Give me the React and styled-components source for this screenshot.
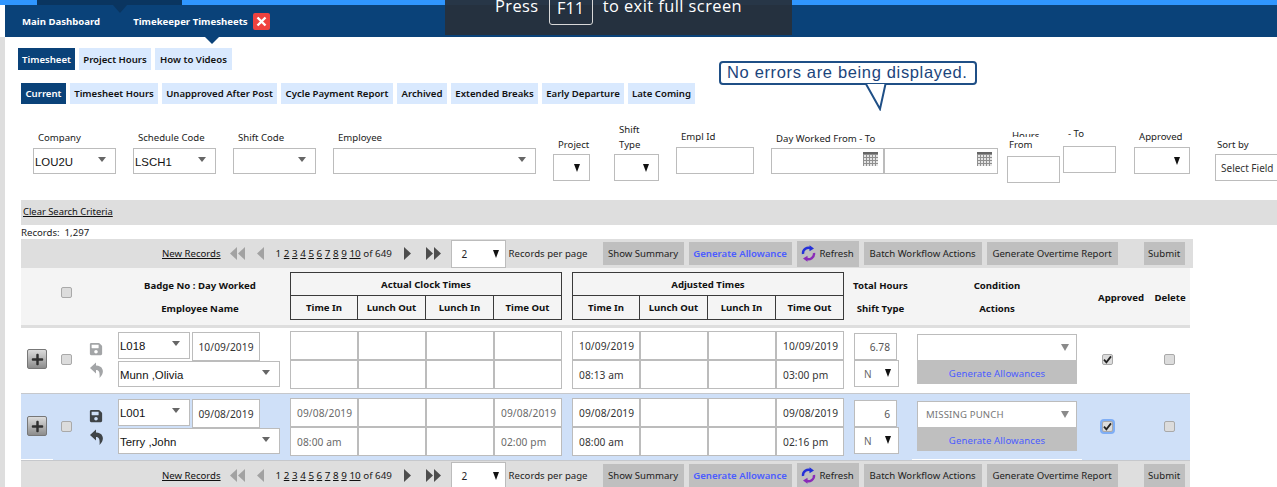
import React from "react";
import styled, { createGlobalStyle } from "styled-components";
import { FaSave, FaPlus } from "react-icons/fa";

const UI = `"Noto Sans", "Open Sans", sans-serif`;
const ARIAL = `"Liberation Sans", Arial, sans-serif`;
const COLS = "32px 27px 32px 178px 272px 10px 272px 63px 180px 60px 43px";

const Global = createGlobalStyle`
  html, body { margin: 0; padding: 0; height: 100%; background: #fff; overflow: hidden; }
  body { font-family: ${UI}; font-size: 10px; color: #222; }
  * { box-sizing: border-box; }
`;

const Page = styled.div`
  position: relative;
  width: 1277px;
  height: 487px;
  overflow: hidden;
  display: flex;
  flex-direction: column;
`;

const TopStrip = styled.div`height: 5px; background: #2f96ff; flex: none;`;

const Nav = styled.nav`
  flex: none;
  height: 32px;
  margin-left: 5px;
  background: #0a4279;
  display: flex;
  align-items: center;
  padding: 0 0 0 17px;
  color: #fff;
  font-weight: 700;
  font-size: 9.6px;
`;

const NavItem = styled.span`
  position: relative;
  margin-left: ${(p) => p.$ml || 0}px;
  white-space: nowrap;
`;

const ActiveMark = styled.div`
  position: absolute;
  left: 37px;
  top: 0;
  width: 145px;
  height: 5px;
  background: #0a3560;
  &::after {
    content: "";
    position: absolute;
    left: 76px;
    top: 5px;
    border: 7px solid transparent;
    border-top: 8px solid #0a3560;
    border-bottom: 0;
  }
`;

const PageMark = styled.div`
  position: absolute;
  left: 205px;
  top: 37px;
  border: 7px solid transparent;
  border-top-color: #0a4279;
  border-bottom: 0;
`;

const CloseTab = styled.span`
  width: 17px;
  height: 17px;
  margin-left: 5px;
  background: #f0423f;
  border-radius: 2px;
  display: flex;
  align-items: center;
  justify-content: center;
`;

const FullscreenHint = styled.div`
  position: absolute;
  left: 445px;
  top: 0;
  width: 347px;
  height: 35px;
  background: rgba(39, 48, 60, 0.94);
  color: #fff;
  font-family: "Open Sans", sans-serif;
  font-size: 16.4px;
  overflow: hidden;
  display: flex;
  align-items: flex-start;
  padding-left: 50px;
`;

const HintText = styled.span`margin-top: -5px; line-height: 22px; letter-spacing: 0.45px;`;

const KeyCap = styled.span`
  width: 44px;
  height: 39px;
  margin: -14px 10px 0 10px;
  border: 1px solid #d8d8d8;
  border-radius: 3px;
  display: flex;
  align-items: center;
  justify-content: center;
  padding-top: 4px;
`;

const Callout = styled.div`
  position: absolute;
  left: 719px;
  top: 61px;
  width: 258px;
  height: 24px;
  border: 2px solid #1f4f86;
  border-radius: 4px;
  background: #fff;
  color: #1b457c;
  font: 16.5px/18px ${ARIAL};
  letter-spacing: 0.65px;
  padding-left: 6px;
  white-space: nowrap;
`;

const CalloutTail = styled.svg`
  position: absolute;
  left: 863px;
  top: 83px;
  width: 26px;
  height: 28px;
`;

const Body = styled.div`
  flex: 1;
  display: flex;
  min-height: 0;
`;

const SideStrip = styled.div`width: 5px; background: #dedede; flex: none;`;

const Content = styled.main`flex: 1; min-width: 0;`;

const TabRow = styled.div`
  display: flex;
  gap: 4px;
  height: ${(p) => p.$h}px;
  margin: ${(p) => p.$mt}px 0 0 ${(p) => p.$ml}px;
`;

const Tab = styled.a`
  display: flex;
  align-items: center;
  justify-content: center;
  width: ${(p) => p.$w}px;
  background: ${(p) => (p.$active ? "#0a4279" : "#d9e9fe")};
  color: ${(p) => (p.$active ? "#fff" : "#111")};
  font-weight: 600;
  font-size: 9.6px;
  white-space: nowrap;
`;

const FilterBar = styled.section`
  display: flex;
  align-items: flex-start;
  margin-top: 18px;
  height: 78px;
  padding-left: 28px;
  color: #222;
  white-space: nowrap;
`;

const Field = styled.div`
  flex: none;
  width: ${(p) => p.$w}px;
  margin-left: ${(p) => p.$ml || 0}px;
  padding-top: ${(p) => p.$top}px;
`;

const FieldLabel = styled.div`
  height: 15px;
  line-height: 15px;
  font-size: 9.6px;
  padding-left: ${(p) => p.$pl ?? 5}px;
  margin-bottom: ${(p) => p.$mb ?? 3}px;
`;

const ClippedLabel = styled.div`
  height: 6px;
  line-height: 10px;
  overflow: hidden;
  font-size: 9.6px;
  padding-left: 5px;
`;

const SelectBox = styled.div`
  display: flex;
  align-items: center;
  justify-content: space-between;
  width: ${(p) => (p.$w ? `${p.$w}px` : "100%")};
  height: ${(p) => p.$h || 26}px;
  background: #fff;
  border: 1px solid #bcbcbc;
  font: 11.4px ${ARIAL};
  color: #111;
  padding: 1px ${(p) => p.$pr ?? 9}px 0 1px;
  white-space: nowrap;
`;

const NativeBox = styled(SelectBox)`
  height: 27px;
  font: 10px ${UI};
  color: ${(p) => p.$color || "#333"};
  padding-left: ${(p) => p.$pl ?? 5}px;
`;

const SoftCaret = styled.i`
  width: 0;
  height: 0;
  margin-top: -5px;
  border-left: 4.5px solid transparent;
  border-right: 4.5px solid transparent;
  border-top: 5px solid #666;
`;

const ConditionCaret = styled.i`
  width: 0;
  height: 0;
  margin: 0 0 0 auto;
  border-left: 4px solid transparent;
  border-right: 4px solid transparent;
  border-top: 7px solid #8a8a8a;
`;

const HardCaret = styled.i`
  width: 0;
  height: 0;
  border-left: 3.5px solid transparent;
  border-right: 3.5px solid transparent;
  border-top: 8px solid #111;
  margin-top: ${(p) => p.$mt || 0}px;
`;

const TextBox = styled.div`
  height: ${(p) => p.$h || 27}px;
  background: #fff;
  border: 1px solid #bcbcbc;
`;

const DateGroup = styled.div`display: flex;`;

const DateBox = styled.div`
  width: ${(p) => p.$w}px;
  height: 26px;
  border: 1px solid #bcbcbc;
  display: flex;
  justify-content: flex-end;
  align-items: flex-start;
  padding: 3px 5px 0 0;
`;

const CriteriaBar = styled.div`
  margin-left: 16px;
  height: 25px;
  background: #dedede;
  padding: 5px 0 0 2px;
  font-size: 9.4px;
  line-height: 13px;
  color: #111;
`;

const Underlined = styled.a`text-decoration: underline; color: #111;`;

const RecordsLine = styled.div`
  margin-left: 16px;
  height: 14px;
  line-height: 15px;
  font-size: 9.6px;
  color: #222;
  white-space: nowrap;
`;

const Pager = styled.div`
  margin-left: 16px;
  width: ${(p) => p.$w}px;
  height: 29px;
  background: #dedede;
  display: flex;
  align-items: center;
  padding-left: 141px;
  white-space: nowrap;
  font-size: 9.6px;
  color: #222;
  flex: none;
`;

const PageLink = styled(Underlined)`margin-right: 2.6px;`;

const PagerSvg = styled.svg`
  flex: none;
  margin-left: ${(p) => p.$ml}px;
`;

const Numbers = styled.span`margin-left: ${(p) => p.$ml}px; width: 118px; font-size: 9.8px;`;

const PerPage = styled(SelectBox)`
  width: 55px;
  height: 28px;
  margin-left: ${(p) => p.$ml}px;
  padding: 0 6px 0 10px;
  font: 10px ${UI};
  color: #222;
`;

const PerPageLabel = styled.span`margin-left: 3px; width: 94px; font-size: 9.6px;`;

const PagerButton = styled.button`
  flex: none;
  display: flex;
  align-items: center;
  justify-content: center;
  gap: 3px;
  width: ${(p) => p.$w}px;
  height: ${(p) => p.$h || 23}px;
  margin-left: ${(p) => p.$ml ?? 5}px;
  padding: 0;
  background: #bfbfbf;
  border: 0;
  font: ${(p) => (p.$blue ? 600 : 400)} 9.6px ${UI};
  color: ${(p) => (p.$blue ? "#4b5cff" : "#222")};
  white-space: nowrap;
`;

const GridRow = styled.div`
  display: grid;
  grid-template-columns: ${COLS};
  margin-left: 16px;
  width: 1169px;
`;

const HeaderRow = styled(GridRow)`
  height: 57px;
  background: #f4f4f4;
  padding-top: 4px;
  font-weight: 700;
  font-size: 9.6px;
  color: #111;
`;

const Separator = styled.div`
  margin-left: 16px;
  width: 1169px;
  height: 3px;
  background: #dedede;
`;

const HeadStack = styled.div`
  display: flex;
  flex-direction: column;
  align-items: center;
  gap: 8px;
  padding: 6px ${(p) => p.$pr || 0}px 0 ${(p) => p.$pl || 0}px;
  line-height: 15px;
  white-space: nowrap;
`;

const HeadSingle = styled.div`
  text-align: center;
  padding-top: 18px;
  line-height: 15px;
  padding-left: ${(p) => p.$pl || 0}px;
`;

const HeadCheck = styled.div`padding: 15px 0 0 8px;`;

const ClockHead = styled.div`
  display: grid;
  grid-template-columns: repeat(4, 1fr);
  grid-template-rows: 24px 24px;
  height: 48px;
`;

const ClockTitle = styled.div`
  grid-column: 1 / 5;
  display: flex;
  align-items: center;
  justify-content: center;
  border: 1px solid #3a3a3a;
`;

const ClockCol = styled.div`
  display: flex;
  align-items: center;
  justify-content: center;
  border: 1px solid #3a3a3a;
  margin-top: -1px;
  margin-left: ${(p) => (p.$first ? 0 : -1)}px;
  height: 25px;
`;

const DataRow = styled(GridRow)`
  height: ${(p) => (p.$selected ? 67 : 66)}px;
  padding-top: ${(p) => (p.$selected ? 4 : 3)}px;
  background: ${(p) => (p.$selected ? "#cfe0f8" : "#fff")};
  border-bottom: 1px solid #c6c8cc;
`;

const ExpandCell = styled.div`
  position: relative;
  padding: 18px 0 0 6px;
  &::after {
    content: "";
    display: ${(p) => (p.$mark ? "block" : "none")};
    position: absolute;
    left: 0;
    right: 0;
    bottom: 0;
    height: 1px;
    background: #fff;
  }
`;

const PlusButton = styled.span`
  display: flex;
  align-items: center;
  justify-content: center;
  width: 20px;
  height: 20px;
  border: 1px solid #777;
  border-radius: 2px;
  background: linear-gradient(#dcdcdc, #8c8c8c);
  color: #2f2f2f;
  font-size: 13px;
`;

const CheckCell = styled.div`padding: 23px 0 0 8px;`;

const Box = styled.span`
  display: flex;
  align-items: center;
  justify-content: center;
  width: 11px;
  height: 11px;
  background: #dcdcdc;
  border: 1px solid #a9a9a9;
  border-radius: 2px;
  box-shadow: ${(p) => (p.$focus ? "0 0 0 2px #7faef5" : "none")};
`;

const IconCell = styled.div`
  display: flex;
  flex-direction: column;
  align-items: center;
  gap: 6px;
  padding-top: 11px;
  color: ${(p) => (p.$active ? "#3f4448" : "#a3a5a7")};
  font-size: 14px;
`;

const BadgeCell = styled.div`padding: 1px 0 0 6px;`;

const BadgeLine = styled.div`display: flex; gap: 2px; height: 29px;`;

const DateValue = styled.div`
  width: 68px;
  height: 29px;
  background: #fff;
  border: 1px solid #bcbcbc;
  display: flex;
  align-items: center;
  justify-content: center;
  font-size: 10.2px;
  color: #333;
  letter-spacing: 0.1px;
`;

const TimeGrid = styled.div`
  display: grid;
  grid-template-columns: repeat(4, 68px);
  grid-template-rows: 29px 29px;
`;

const TimeCell = styled.div`
  display: flex;
  align-items: center;
  padding-left: 6px;
  background: #fff;
  border: 1px solid #bcbcbc;
  font-size: 10.2px;
  letter-spacing: 0.1px;
  color: ${(p) => (p.$muted ? "#6a6a6a" : "#333")};
`;

const TotalCell = styled.div`padding: 2px 0 0 10px;`;

const HoursBox = styled.div`
  width: 43px;
  height: 27px;
  background: #fff;
  border: 1px solid #bcbcbc;
  display: flex;
  align-items: center;
  justify-content: flex-end;
  padding-right: 6px;
  font-size: 10.2px;
  color: #555;
`;

const ConditionCell = styled.div`
  position: relative;
  padding: 3px 10px 0;
  &::after {
    content: "";
    display: ${(p) => (p.$mark ? "block" : "none")};
    position: absolute;
    left: 5px;
    right: 5px;
    bottom: 0;
    height: 1px;
    background: #fff;
  }
`;

const ConditionSelect = styled.div`
  height: 26px;
  background: #fff;
  border: 1px solid #bcbcbc;
  border-bottom: 0;
  display: flex;
  align-items: center;
  padding: 0 7px 0 8px;
  color: #777;
  font-size: 9.6px;
  letter-spacing: 0.15px;
`;

const GenerateBar = styled.div`
  height: 24px;
  background: #bfbfbf;
  color: #4b5cff;
  font-size: 9.6px;
  display: flex;
  align-items: center;
  justify-content: center;
  padding-top: 2px;
  letter-spacing: 0.1px;
`;

const ApproveCell = styled.div`padding: 23px 0 0 ${(p) => p.$pl}px;`;

const CheckMark = () => (
  <svg width="9" height="9" viewBox="0 0 9 9">
    <path d="M1 4.6 L3.4 7.4 L8 1.4" fill="none" stroke="#222" strokeWidth="1.8" />
  </svg>
);

const UndoIcon = () => (
  <svg width="13" height="16" viewBox="0 0 13 16">
    <path
      d="M6 0.5 L0 6 L6 11.5 V8 C9 8 10 10 9.5 16 C12.5 13 13.5 10 12.5 7.5 C11.5 4.5 9 3.5 6 3.5 Z"
      fill="currentColor"
    />
  </svg>
);

const CalendarIcon = () => (
  <svg width="15" height="14" viewBox="0 0 15 14">
    <rect x="0" y="0" width="15" height="14" fill="#8f8f8f" />
    <rect x="0" y="0" width="15" height="2" fill="#666" />
    {[3, 6, 9, 12].map((y) =>
      [1, 4, 7, 10, 13].map((x) => (
        <rect key={`${x}-${y}`} x={x} y={y} width="2" height="2" fill="#e4e4e4" />
      ))
    )}
  </svg>
);

const Arrows = ({ dir, count, color, ml }) => {
  const w = count === 2 ? 16 : 9;
  const tri = (x) =>
    dir === "left"
      ? `M${x + 7} 1 L${x} 7.5 L${x + 7} 14 Z`
      : `M${x} 1 L${x + 7} 7.5 L${x} 14 Z`;
  return (
    <PagerSvg $ml={ml} width={w} height="15" viewBox={`0 0 ${w} 15`}>
      <path d={tri(0)} fill={color} />
      {count === 2 && <path d={tri(8)} fill={color} />}
    </PagerSvg>
  );
};

const RefreshIcon = () => (
  <svg width="15" height="17" viewBox="0 0 15 17">
    <path d="M2 9 A5.6 5.6 0 0 1 10 3.3" fill="none" stroke="#2430d8" strokeWidth="2.4" />
    <path d="M8.5 0.3 L13 3.6 L8.5 6.3 Z" fill="#2430d8" />
    <path d="M13 8 A5.6 5.6 0 0 1 5 13.7" fill="none" stroke="#8a2bb8" strokeWidth="2.4" />
    <path d="M6.5 10.7 L2 13.4 L6.5 16.7 Z" fill="#8a2bb8" />
  </svg>
);

const PagerBar = ({ width }) => (
  <Pager $w={width}>
    <Underlined>New Records</Underlined>
    <Arrows dir="left" count={2} color="#a2a2a2" ml={9} />
    <Arrows dir="left" count={1} color="#a2a2a2" ml={11} />
    <Numbers $ml={10}>
      1{" "}
      {[2, 3, 4, 5, 6, 7, 8, 9, 10].map((n) => (
        <PageLink key={n}>{n}</PageLink>
      ))}
      of 649
    </Numbers>
    <Arrows dir="right" count={1} color="#4d4d4d" ml={10} />
    <Arrows dir="right" count={2} color="#4d4d4d" ml={13} />
    <PerPage $ml={9}>
      2<HardCaret />
    </PerPage>
    <PerPageLabel>Records per page</PerPageLabel>
    <PagerButton $w={81} $ml={0}>Show Summary</PagerButton>
    <PagerButton $w={103} $blue>Generate Allowance</PagerButton>
    <PagerButton $w={62} $h={26}>
      <RefreshIcon />
      Refresh
    </PagerButton>
    <PagerButton $w={118}>Batch Workflow Actions</PagerButton>
    <PagerButton $w={131}>Generate Overtime Report</PagerButton>
    <PagerButton $w={41} $ml={26}>Submit</PagerButton>
  </Pager>
);

const Clock = ({ title }) => (
  <ClockHead>
    <ClockTitle>{title}</ClockTitle>
    {["Time In", "Lunch Out", "Lunch In", "Time Out"].map((t, i) => (
      <ClockCol key={t} $first={i === 0}>{t}</ClockCol>
    ))}
  </ClockHead>
);

const Times = ({ top, bottom, muted }) => (
  <TimeGrid>
    <TimeCell $muted={muted}>{top?.[0]}</TimeCell>
    <TimeCell />
    <TimeCell />
    <TimeCell $muted={muted}>{top?.[1]}</TimeCell>
    <TimeCell $muted={muted}>{bottom?.[0]}</TimeCell>
    <TimeCell />
    <TimeCell />
    <TimeCell $muted={muted}>{bottom?.[1]}</TimeCell>
  </TimeGrid>
);

const Row = ({ selected, badge, date, name, actual, adjusted, hours, condition }) => (
  <DataRow $selected={selected}>
    <ExpandCell $mark={selected}>
      <PlusButton><FaPlus /></PlusButton>
    </ExpandCell>
    <CheckCell><Box /></CheckCell>
    <IconCell $active={selected}>
      <FaSave />
      <UndoIcon />
    </IconCell>
    <BadgeCell>
      <BadgeLine>
        <SelectBox $w={72} $h={27}>{badge}<SoftCaret /></SelectBox>
        <DateValue>{date}</DateValue>
      </BadgeLine>
      <SelectBox $w={162}>{name}<SoftCaret /></SelectBox>
    </BadgeCell>
    <Times top={actual?.top} bottom={actual?.bottom} muted />
    <span />
    <Times top={adjusted.top} bottom={adjusted.bottom} />
    <TotalCell>
      <HoursBox>{hours}</HoursBox>
      <NativeBox $w={45} $pl={9} $pr={7} $color="#666">N<HardCaret $mt={-3} /></NativeBox>
    </TotalCell>
    <ConditionCell $mark={selected}>
      <ConditionSelect>{condition}<ConditionCaret /></ConditionSelect>
      <GenerateBar>Generate Allowances</GenerateBar>
    </ConditionCell>
    <ApproveCell $pl={15}>
      <Box $focus={selected}><CheckMark /></Box>
    </ApproveCell>
    <ApproveCell $pl={17}><Box /></ApproveCell>
  </DataRow>
);

export default function App() {
  return (
    <Page>
      <Global />
      <TopStrip />
      <Nav>
        <NavItem>Main Dashboard</NavItem>
        <NavItem $ml={33}>Timekeeper Timesheets</NavItem>
        <CloseTab>
          <svg width="11" height="11" viewBox="0 0 11 11">
            <path d="M1.5 1.5 L9.5 9.5 M9.5 1.5 L1.5 9.5" stroke="#fff" strokeWidth="2.4" />
          </svg>
        </CloseTab>
      </Nav>
      <Body>
        <SideStrip />
        <Content>
          <TabRow $h={22} $mt={11} $ml={13}>
            <Tab $w={57} $active>Timesheet</Tab>
            <Tab $w={72}>Project Hours</Tab>
            <Tab $w={77}>How to Videos</Tab>
          </TabRow>
          <TabRow $h={21} $mt={13} $ml={16}>
            <Tab $w={45} $active>Current</Tab>
            <Tab $w={88}>Timesheet Hours</Tab>
            <Tab $w={115}>Unapproved After Post</Tab>
            <Tab $w={112}>Cycle Payment Report</Tab>
            <Tab $w={50}>Archived</Tab>
            <Tab $w={87}>Extended Breaks</Tab>
            <Tab $w={82}>Early Departure</Tab>
            <Tab $w={67}>Late Coming</Tab>
          </TabRow>
          <FilterBar>
            <Field $w={83} $top={8}>
              <FieldLabel>Company</FieldLabel>
              <SelectBox>LOU2U<SoftCaret /></SelectBox>
            </Field>
            <Field $w={83} $ml={17} $top={8}>
              <FieldLabel>Schedule Code</FieldLabel>
              <SelectBox>LSCH1<SoftCaret /></SelectBox>
            </Field>
            <Field $w={83} $ml={17} $top={8}>
              <FieldLabel>Shift Code</FieldLabel>
              <SelectBox><span /><SoftCaret /></SelectBox>
            </Field>
            <Field $w={203} $ml={17} $top={8}>
              <FieldLabel>Employee</FieldLabel>
              <SelectBox><span /><SoftCaret /></SelectBox>
            </Field>
            <Field $w={37} $ml={17} $top={15}>
              <FieldLabel $mb={2}>Project</FieldLabel>
              <NativeBox><span /><HardCaret /></NativeBox>
            </Field>
            <Field $w={45} $ml={24} $top={0}>
              <FieldLabel $mb={0}>Shift</FieldLabel>
              <FieldLabel $mb={2}>Type</FieldLabel>
              <NativeBox><span /><HardCaret /></NativeBox>
            </Field>
            <Field $w={78} $ml={17} $top={7}>
              <FieldLabel $mb={3}>Empl Id</FieldLabel>
              <TextBox />
            </Field>
            <Field $w={227} $ml={17} $top={9}>
              <FieldLabel $mb={2}>Day Worked From - To</FieldLabel>
              <DateGroup>
                <DateBox $w={113}><CalendarIcon /></DateBox>
                <DateBox $w={114}><CalendarIcon /></DateBox>
              </DateGroup>
            </Field>
            <Field $w={53} $ml={9} $top={9}>
              <ClippedLabel>Hours</ClippedLabel>
              <FieldLabel $pl={2} $mb={4}>From</FieldLabel>
              <TextBox />
            </Field>
            <Field $w={53} $ml={3} $top={4}>
              <FieldLabel $mb={5}>- To</FieldLabel>
              <TextBox />
            </Field>
            <Field $w={56} $ml={18} $top={7}>
              <FieldLabel $mb={3}>Approved</FieldLabel>
              <NativeBox><span /><HardCaret /></NativeBox>
            </Field>
            <Field $w={80} $ml={25} $top={15}>
              <FieldLabel $pl={2} $mb={2}>Sort by</FieldLabel>
              <NativeBox>Select Field</NativeBox>
            </Field>
          </FilterBar>
          <CriteriaBar><Underlined>Clear Search Criteria</Underlined></CriteriaBar>
          <RecordsLine>Records:&nbsp; 1,297</RecordsLine>
          <PagerBar width={1172} />
          <HeaderRow>
            <span />
            <HeadCheck><Box /></HeadCheck>
            <span />
            <HeadStack $pr={2}>
              <span>Badge No : Day Worked</span>
              <span>Employee Name</span>
            </HeadStack>
            <Clock title="Actual Clock Times" />
            <span />
            <Clock title="Adjusted Times" />
            <HeadStack $pl={10}>
              <span>Total Hours</span>
              <span>Shift Type</span>
            </HeadStack>
            <HeadStack>
              <span>Condition</span>
              <span>Actions</span>
            </HeadStack>
            <HeadSingle $pl={8}>Approved</HeadSingle>
            <HeadSingle $pl={3}>Delete</HeadSingle>
          </HeaderRow>
          <Separator />
          <Row
            badge="L018"
            date="10/09/2019"
            name="Munn ,Olivia"
            adjusted={{ top: ["10/09/2019", "10/09/2019"], bottom: ["08:13 am", "03:00 pm"] }}
            hours="6.78"
          />
          <Row
            selected
            badge="L001"
            date="09/08/2019"
            name="Terry ,John"
            actual={{ top: ["09/08/2019", "09/08/2019"], bottom: ["08:00 am", "02:00 pm"] }}
            adjusted={{ top: ["09/08/2019", "09/08/2019"], bottom: ["08:00 am", "02:16 pm"] }}
            hours="6"
            condition="MISSING PUNCH"
          />
          <PagerBar width={1169} />
        </Content>
      </Body>
      <ActiveMark />
      <PageMark />
      <FullscreenHint>
        <HintText>Press</HintText>
        <KeyCap>F11</KeyCap>
        <HintText>to exit full screen</HintText>
      </FullscreenHint>
      <Callout>No errors are being displayed.</Callout>
      <CalloutTail viewBox="0 0 26 28">
        <path d="M3 1 L17 26 L22.5 1" fill="#fff" stroke="#1f4f86" strokeWidth="2" />
      </CalloutTail>
    </Page>
  );
}
